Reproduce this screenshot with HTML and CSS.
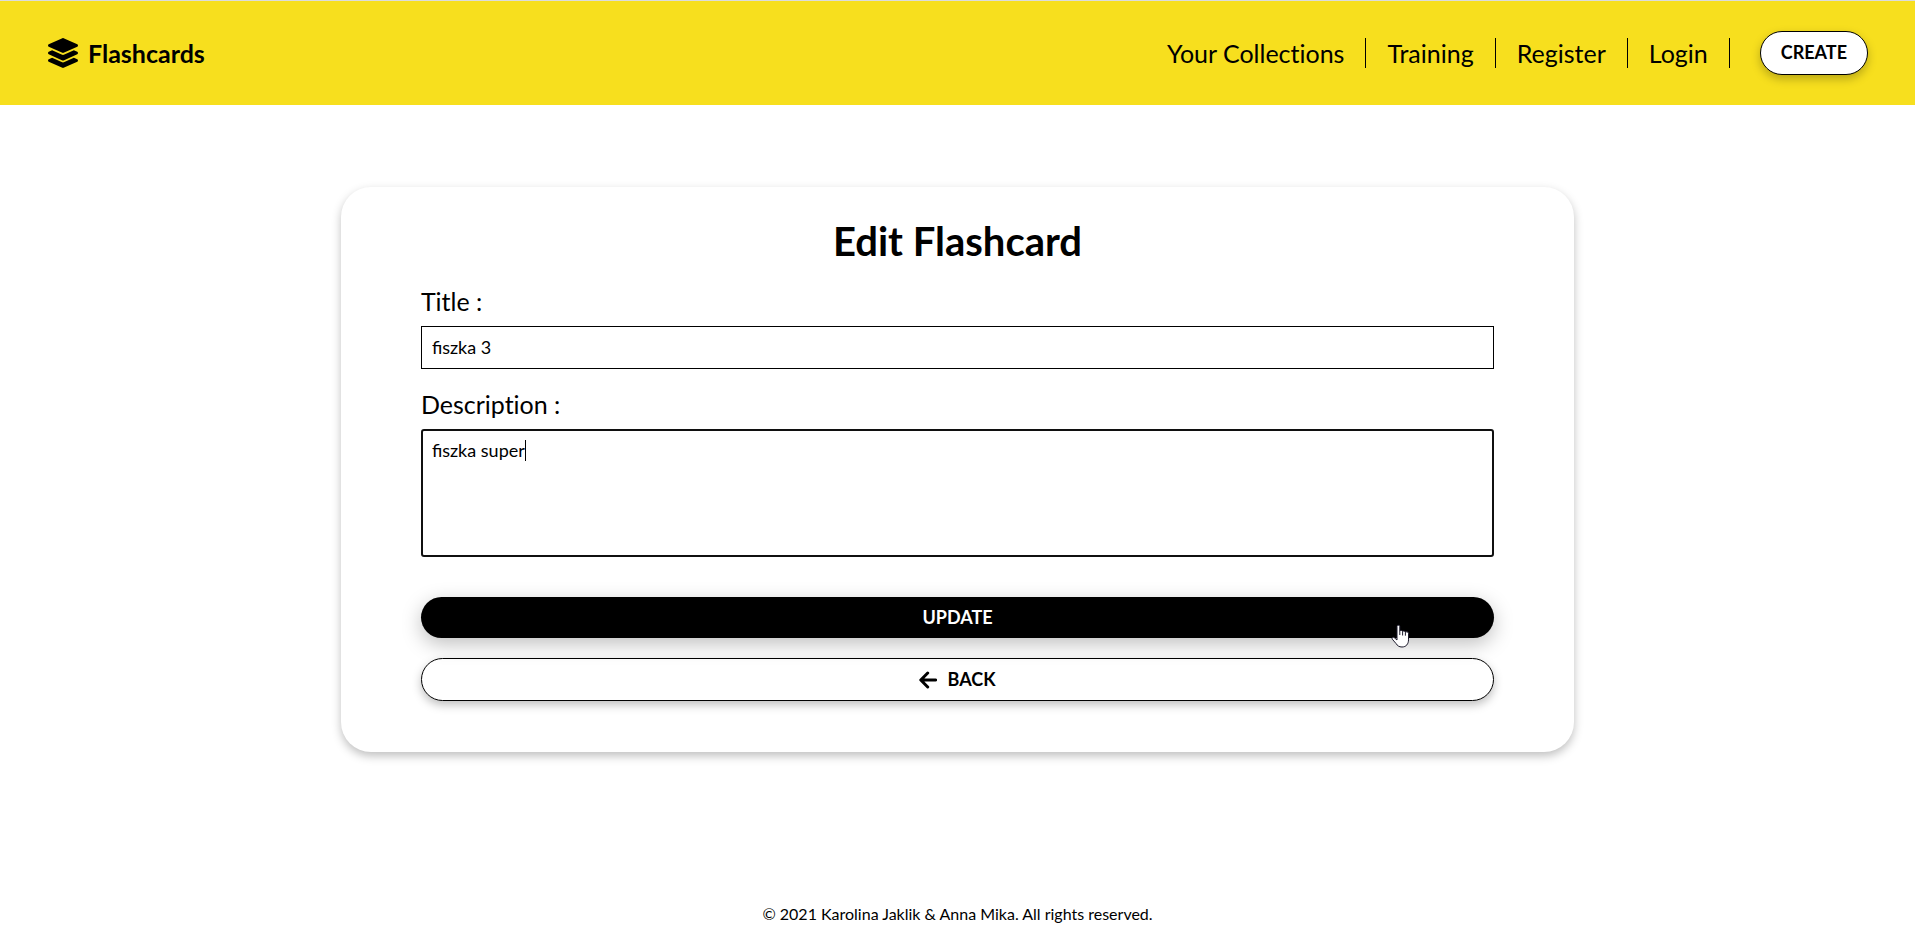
FILE: index.html
```html
<!DOCTYPE html>
<html lang="en">
<head>
<meta charset="utf-8">
<title>Flashcards</title>
<link rel="stylesheet" href="styles.css">
</head>
<body>
<header class="header">
  <a class="brand" href="#">
    <svg class="brand-icon" viewBox="0 0 512 512" aria-hidden="true"><path d="M12.41 148.02l232.94 105.67c6.8 3.09 14.49 3.09 21.29 0l232.94-105.67c16.55-7.51 16.55-32.52 0-40.03L266.65 2.31a25.607 25.607 0 0 0-21.29 0L12.41 107.98c-16.55 7.51-16.55 32.53 0 40.04zm487.18 88.28l-58.09-26.33-161.64 73.27c-7.56 3.43-15.59 5.17-23.86 5.17s-16.29-1.74-23.86-5.17L70.51 209.97l-58.1 26.33c-16.55 7.5-16.55 32.5 0 40l232.94 105.59c6.8 3.08 14.49 3.08 21.29 0L499.59 276.3c16.55-7.5 16.55-32.5 0-40zm0 127.8l-57.87-26.23-161.86 73.37c-7.56 3.43-15.59 5.17-23.86 5.17s-16.29-1.74-23.86-5.17L70.29 337.87 12.41 364.1c-16.55 7.5-16.55 32.5 0 40l232.94 105.59c6.8 3.08 14.49 3.08 21.29 0L499.59 404.1c16.55-7.5 16.55-32.5 0-40z"/></svg>
    <span>Flashcards</span>
  </a>
  <nav class="nav">
    <a class="nav-link" href="#">Your Collections</a>
    <a class="nav-link" href="#">Training</a>
    <a class="nav-link" href="#">Register</a>
    <a class="nav-link" href="#">Login</a>
    <button class="button button-create" type="button">CREATE</button>
  </nav>
</header>
<main class="main">
  <form class="card">
    <h1 class="card-title">Edit Flashcard</h1>
    <label class="label" for="title">Title :</label>
    <input class="field" id="title" type="text" value="fiszka 3">
    <label class="label" for="description">Description :</label>
    <div class="field-wrap">
      <textarea class="field field-area" id="description">fiszka super</textarea>
      <span class="caret"></span>
    </div>
    <div class="field-wrap">
      <button class="button button-update" type="button">UPDATE</button>
      <svg class="pointer" viewBox="0 0 20 24" aria-hidden="true"><path d="M6 2.2C6 .9 8.8.9 8.8 2.2V7c.4-.9 2.6-.7 2.8.5.6-.8 2.6-.5 2.8.7.8-.7 3.1-.4 3.1 1.3v6.3c0 4-2.2 7.2-6.5 7.2-3 0-4.6-1.3-6-3.5L1.300 15.200c-1-1.600.6-2.600 2-1.500L6 16z" fill="#fff" stroke="#1c1a2c" stroke-width="1"/><path d="M8.800 7v4M11.600 7.500v4M14.400 8.200v3.500" stroke="#1c1a2c" fill="none"/></svg>
    </div>
    <button class="button button-back" type="button">
      <svg class="back-icon" viewBox="0 0 18 18" aria-hidden="true"><path d="M8.700 2L1.800 9l6.900 7M2.200 9h14.400"/></svg>
      <span>BACK</span>
    </button>
  </form>
</main>
<footer class="footer">© 2021 Karolina Jaklik &amp; Anna Mika. All rights reserved.</footer>
</body>
</html>
```
FILE: styles.css
```css
* {
  box-sizing: border-box;
}

body {
  display: flex;
  flex-direction: column;
  min-height: 100vh;
  margin: 0;
  background: #fff;
  color: #000;
  font-family: Lato, sans-serif;
  font-variant-ligatures: none;
}

.header {
  display: flex;
  align-items: center;
  justify-content: space-between;
  padding: 30px 47px 30px 48px;
  border-top: 1px solid #dcdcdc;
  background: #f7df1e;
}

.brand {
  display: flex;
  align-items: center;
  gap: 10px;
  color: inherit;
  font-size: 25px;
  font-weight: 700;
  line-height: 30px;
  text-decoration: none;
}

.brand-icon {
  width: 30px;
  height: 30px;
}

.nav {
  display: flex;
  align-items: center;
}

.nav-link {
  padding: 0 21px;
  border-right: 1px solid #000;
  color: inherit;
  font-size: 25px;
  line-height: 30px;
  text-decoration: none;
}

.button {
  border: 1px solid #000;
  border-radius: 22px;
  background: #fff;
  box-shadow: 0 4px 10px rgba(0, 0, 0, 0.25);
  color: #000;
  font-family: inherit;
  font-size: 18px;
  font-weight: 700;
  line-height: 25px;
  cursor: pointer;
}

.button-create {
  margin-left: 30px;
  padding: 8px 20px 9px;
}

.main {
  flex: 1;
  padding: 82px 0;
}

.card {
  display: flex;
  flex-direction: column;
  width: 64.4%;
  margin: 0 auto;
  padding: 30px 80px 51px;
  border-radius: 30px;
  box-shadow: 0 4px 10px rgba(0, 0, 0, 0.25);
}

.card-title {
  margin: 0 0 20px;
  font-size: 40px;
  font-weight: 700;
  line-height: 49px;
  text-align: center;
}

.label {
  margin-bottom: 10px;
  font-size: 25px;
  line-height: 30px;
}

.field {
  display: block;
  width: 100%;
  margin: 0 0 20px;
  padding: 10px;
  border: 1px solid #000;
  background: #fff;
  color: #000;
  font-family: inherit;
  font-size: 18px;
  font-variant-ligatures: normal;
  line-height: 21px;
}

.field-wrap {
  position: relative;
}

.field-area {
  height: 128px;
  margin-bottom: 40px;
  padding: 9px;
  border: 2px solid #101010;
  border-radius: 3px;
  resize: none;
}

.caret {
  position: absolute;
  top: 11px;
  left: 104px;
  width: 1px;
  height: 21px;
  background: #000;
}

.button-update {
  display: block;
  width: 100%;
  margin-bottom: 20px;
  padding: 8px;
  border: 0;
  background: #000;
  box-shadow: 0 6px 20px rgba(0, 0, 0, 0.25);
  color: #fff;
}

.pointer {
  position: absolute;
  top: 27px;
  right: 83px;
  width: 20px;
  height: 24px;
}

.button-back {
  display: flex;
  align-items: center;
  justify-content: center;
  gap: 10px;
  padding: 8px;
}

.back-icon {
  width: 18px;
  height: 18px;
  fill: none;
  stroke: #000;
  stroke-width: 3;
  stroke-linecap: round;
  stroke-linejoin: round;
}

.footer {
  padding-bottom: 12px;
  font-size: 16px;
  line-height: 20px;
  text-align: center;
}
```
